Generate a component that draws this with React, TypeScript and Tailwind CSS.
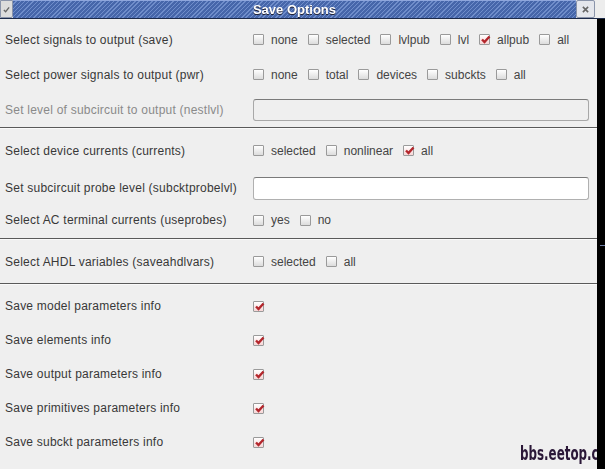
import React from "react";

const font = { fontFamily: '"Liberation Sans", Arial, sans-serif' };

function Box({ checked = false }: { checked?: boolean }) {
  return (
    <span
      className={`relative inline-block w-[11px] h-[11px] shrink-0 rounded-[1px] border border-[#9a9a9a] ${
        checked ? "bg-[linear-gradient(#fff,#f6d6d6)]" : "bg-[linear-gradient(#ffffff,#dcdcdc)]"
      }`}
    >
      {checked && (
        <svg viewBox="0 0 11 11" className="absolute left-0 top-0 w-[11px] h-[11px] -mt-[1px]">
          <path d="M2 5.5 L4.5 8 L9.5 2.5" fill="none" stroke="#b3262c" strokeWidth="2.4" />
        </svg>
      )}
    </span>
  );
}

function Opt({ label, checked = false }: { label: string; checked?: boolean }) {
  return (
    <span className="flex items-center gap-[7px] mr-[10px]">
      <Box checked={checked} />
      <span>{label}</span>
    </span>
  );
}

function Row({
  label,
  h,
  disabled = false,
  children,
}: {
  label: string;
  h: string;
  disabled?: boolean;
  children?: React.ReactNode;
}) {
  return (
    <div className={`flex items-center ${h}`}>
      <div
        className={`w-[253px] pl-[5px] shrink-0 tracking-[0.23px] ${disabled ? "text-[#8a8a8a]" : "text-[#383838]"}`}
      >
        {label}
      </div>
      <div className="flex items-center flex-1 pr-[7px] text-[#444]">{children}</div>
    </div>
  );
}

function Sep() {
  return <div className="h-[2px] border-t border-[#5a5a5a] bg-[#fafafa]" />;
}

export default function App() {
  return (
    <div className="w-[605px] h-[469px] overflow-hidden bg-black text-[12px] relative" style={font}>
      {/* title bar */}
      <div className="flex h-[19px] bg-[#e8e8e8] border-b border-[#1c2a4a]">
        <div className="w-[13px] h-[18px] bg-[#dcdcdc] border border-[#8a94aa] rounded-br-[2px] flex items-center justify-center">
          <svg viewBox="0 0 8 8" className="w-[7px] h-[7px]">
            <path d="M1 4.5 L3 6.5 L7 1.5" fill="none" stroke="#666" strokeWidth="1.5" />
          </svg>
        </div>
        <div className="flex-1 flex items-center justify-center bg-[#4a69ad] bg-[repeating-linear-gradient(135deg,#4666aa_0px,#4666aa_2px,#6f8dca_2px,#6f8dca_3px)] border-t border-[#8ea6dc]">
          <span className="text-white font-bold text-[13px] drop-shadow-[0_1px_0_#223]">Save Options</span>
        </div>
        <div className="w-[19px] h-[18px] bg-[#e4e6ec] border border-[#8a94aa] rounded-[2px] flex items-center justify-center">
          <svg viewBox="0 0 8 8" className="w-[7px] h-[7px]">
            <path d="M1 1 L7 7 M7 1 L1 7" stroke="#666" strokeWidth="1.8" />
          </svg>
        </div>
        <div className="w-[10px] bg-[#ededed]" />
      </div>

      <div className="flex h-[450px]">
        <div className="w-[597px] bg-[#efefef] relative overflow-hidden">
          <div className="pt-[3px]">
            <Row label="Select signals to output (save)" h="h-[35px]">
              <Opt label="none" />
              <Opt label="selected" />
              <Opt label="lvlpub" />
              <Opt label="lvl" />
              <Opt label="allpub" checked />
              <Opt label="all" />
            </Row>
            <Row label="Select power signals to output (pwr)" h="h-[35px]">
              <Opt label="none" />
              <Opt label="total" />
              <Opt label="devices" />
              <Opt label="subckts" />
              <Opt label="all" />
            </Row>
            <Row label="Set level of subcircuit to output (nestlvl)" h="h-[35px]" disabled>
              <div className="w-[336px] h-[22px] rounded-[3px] border border-[#a8a8a8] border-t-[#7a7a7a] bg-[#efefef]" />
            </Row>
          </div>
          <Sep />
          <Row label="Select device currents (currents)" h="h-[43px]">
            <Opt label="selected" />
            <Opt label="nonlinear" />
            <Opt label="all" checked />
          </Row>
          <Row label="Set subcircuit probe level (subcktprobelvl)" h="h-[32px]">
            <div className="w-[336px] h-[23px] rounded-[3px] border border-[#b0b0b0] border-t-[#7a7a7a] bg-white" />
          </Row>
          <Row label="Select AC terminal currents (useprobes)" h="h-[32px]">
            <Opt label="yes" />
            <Opt label="no" />
          </Row>
          <div className="h-[2px]" />
          <Sep />
          <Row label="Select AHDL variables (saveahdlvars)" h="h-[43px]">
            <Opt label="selected" />
            <Opt label="all" />
          </Row>
          <Sep />
          <div className="pt-[4px]">
            {[
              "Save model parameters info",
              "Save elements info",
              "Save output parameters info",
              "Save primitives parameters info",
              "Save subckt parameters info",
            ].map((l) => (
              <Row key={l} label={l} h="h-[34px]">
                <Box checked />
              </Row>
            ))}
          </div>
          <div
            className="absolute left-[520px] bottom-[1px] text-[20px] font-bold text-[#2b1838] whitespace-nowrap scale-x-[0.66] origin-left"
            style={{ fontFamily: '"Liberation Sans Narrow", "DejaVu Sans Condensed", sans-serif' }}
          >
            bbs.eetop.cn
          </div>
        </div>
        <div className="flex-1 bg-black relative">
          <div className="absolute left-[3px] right-0 top-[226px] h-[1px] bg-[#6f7fa8]" />
        </div>
      </div>
    </div>
  );
}
